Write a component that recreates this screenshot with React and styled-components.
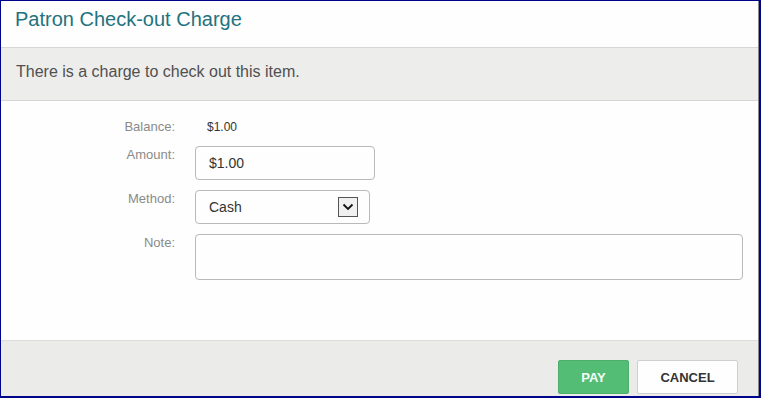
import React from 'react';
import styled, { createGlobalStyle } from 'styled-components';

const GlobalStyle = createGlobalStyle`
  html, body {
    margin: 0;
    padding: 0;
    background: #fdfefd;
  }
  * {
    box-sizing: border-box;
  }
`;

const Frame = styled.div`
  width: 761px;
  height: 398px;
  border-style: solid;
  border-color: #000488;
  border-width: 1px 2px 2px 1px;
  font-family: 'Liberation Sans', Arial, sans-serif;
  overflow: hidden;
`;

const Dialog = styled.div`
  height: 100%;
  display: flex;
  flex-direction: column;
  background: #fdfefd;
  border-right: 1px solid #8a8a8a;
`;

const Header = styled.div`
  height: 47px;
  padding: 7px 0 0 14px;
  border-bottom: 1px solid #d6d6d6;
`;

const Title = styled.h4`
  margin: 0;
  font-size: 20px;
  font-weight: normal;
  color: #23727f;
`;

const Notice = styled.div`
  height: 53px;
  padding: 15px 0 0 15px;
  background: #ededec;
  border-bottom: 1px solid #d6d6d6;
  font-size: 16px;
  color: #505050;
`;

const Body = styled.div`
  flex: 1;
  padding: 19px 15px 0 0;
`;

const Row = styled.div`
  display: flex;
  align-items: flex-start;
  margin-bottom: ${(p) => p.gap || 10}px;
`;

const Label = styled.div`
  width: 174px;
  text-align: right;
  font-size: 13px;
  color: #8a8a8a;
  margin-top: ${(p) => p.top || 0}px;
`;

const Value = styled.div`
  margin-left: 32px;
  font-size: 12px;
  color: #333;
`;

const Field = styled.div`
  margin-left: 20px;
  width: ${(p) => p.w}px;
  height: ${(p) => p.h}px;
  border: 1px solid #b9b9b9;
  border-radius: 4px;
  background: #fdfefd;
  display: flex;
  align-items: center;
  justify-content: space-between;
  padding: 0 11px 0 13px;
  font-size: 14px;
  color: #333;
  ${(p) => p.grow && 'flex: 1;'}
`;

const ArrowBox = styled.div`
  width: 20px;
  height: 20px;
  border: 1px solid #555;
  background: #f0f0f0;
  display: flex;
  align-items: center;
  justify-content: center;
`;

const Footer = styled.div`
  height: 56px;
  background: #ebebea;
  border-top: 1px solid #dcdcdc;
  display: flex;
  justify-content: flex-end;
  align-items: flex-start;
  gap: 8px;
  padding: 19px 20px 0 0;
`;

const Button = styled.button`
  height: 34px;
  width: ${(p) => p.w}px;
  border-radius: 2px;
  font-family: 'Liberation Sans', Arial, sans-serif;
  font-size: 13px;
  font-weight: bold;
  cursor: pointer;
  ${(p) =>
    p.primary
      ? 'background: #53bc75; border: 1px solid #4cb06c; color: #f4fff6;'
      : 'background: #fdfefd; border: 1px solid #cfcfcf; color: #333;'}
`;

const App = () => (
  <Frame>
    <GlobalStyle />
    <Dialog>
      <Header>
        <Title>Patron Check-out Charge</Title>
      </Header>
      <Notice>There is a charge to check out this item.</Notice>
      <Body>
        <Row gap={12}>
          <Label top={-1}>Balance:</Label>
          <Value>$1.00</Value>
        </Row>
        <Row gap={10}>
          <Label top={1}>Amount:</Label>
          <Field w={180} h={34}>$1.00</Field>
        </Row>
        <Row gap={10}>
          <Label top={1}>Method:</Label>
          <Field w={175} h={34}>
            Cash
            <ArrowBox>
              <svg width="12" height="8" viewBox="0 0 12 8">
                <path d="M1.5 1.5 L6 6 L10.5 1.5" fill="none" stroke="#111" strokeWidth="1.8" />
              </svg>
            </ArrowBox>
          </Field>
        </Row>
        <Row>
          <Label top={1}>Note:</Label>
          <Field h={46} grow />
        </Row>
      </Body>
      <Footer>
        <Button primary w={71}>PAY</Button>
        <Button w={101}>CANCEL</Button>
      </Footer>
    </Dialog>
  </Frame>
);

export default App;
